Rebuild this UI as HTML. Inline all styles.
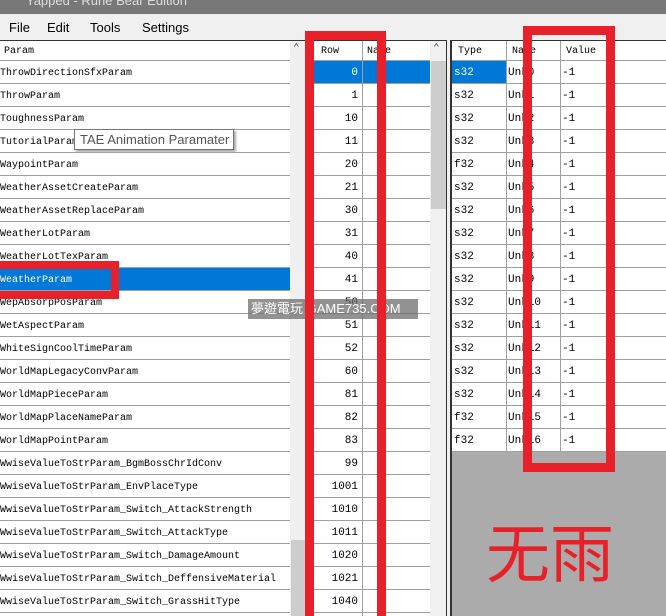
<!DOCTYPE html>
<html style="overflow:hidden;width:666px;height:616px"><head><meta charset="utf-8"><style>
*{margin:0;padding:0;box-sizing:border-box}
body{width:666px;height:616px;overflow:hidden;background:#f0f0f0;position:relative;font-family:"Liberation Mono","Noto Sans CJK SC",monospace;font-size:10px;color:#000}
.a{position:absolute}
.title{left:0;top:0;width:666px;height:14px;background:#787878;color:#ddd;font:13px "Liberation Sans",sans-serif;line-height:2px;padding-left:26px;overflow:hidden}
.menu{top:14px;left:0;width:666px;height:26px;background:#f0f0f0;font:13px "Liberation Sans",sans-serif}
.menu span{position:absolute;top:6px}
.panel{background:#fff;border-top:1px solid #333;border-left:1px solid #333}
.hdr{height:20px;border-bottom:1px solid #a0a0a0;line-height:22px;background:#fff}
.row{position:absolute;height:23px;border-bottom:1px solid #a0a0a0;line-height:25px;white-space:nowrap;overflow:hidden}
.sel{background:#0078d7;color:#fff}
.red{position:absolute;border:9px solid #e8202a}
.sb{position:absolute;background:#f0f0f0}
</style></head><body>
<div class="a title">Yapped - Rune Bear Edition</div>
<div class="a menu"><span style="left:9px">File</span><span style="left:47px">Edit</span><span style="left:90px">Tools</span><span style="left:142px">Settings</span></div>

<div class="a panel" style="left:0;top:40px;width:306px;height:576px;border-left:none">
<div class="hdr" style="width:290px;padding-left:4px">Param</div>
</div>
<div class="sb" style="left:290px;top:41px;width:16px;height:575px"></div>
<div class="a" style="left:293px;top:41px;font-size:11px;color:#555">&#8963;</div>
<div class="a" style="left:291px;top:540px;width:15px;height:76px;background:#cdcdcd"></div>
<div class="a" style="left:0;top:61px;width:290px">
<div class="row" style="top:0;width:290px">ThrowDirectionSfxParam</div>
<div class="row" style="top:23px;width:290px">ThrowParam</div>
<div class="row" style="top:46px;width:290px">ToughnessParam</div>
<div class="row" style="top:69px;width:290px">TutorialParam</div>
<div class="row" style="top:92px;width:290px">WaypointParam</div>
<div class="row" style="top:115px;width:290px">WeatherAssetCreateParam</div>
<div class="row" style="top:138px;width:290px">WeatherAssetReplaceParam</div>
<div class="row" style="top:161px;width:290px">WeatherLotParam</div>
<div class="row" style="top:184px;width:290px">WeatherLotTexParam</div>
<div class="row sel" style="top:207px;width:290px">WeatherParam</div>
<div class="row" style="top:230px;width:290px">WepAbsorpPosParam</div>
<div class="row" style="top:253px;width:290px">WetAspectParam</div>
<div class="row" style="top:276px;width:290px">WhiteSignCoolTimeParam</div>
<div class="row" style="top:299px;width:290px">WorldMapLegacyConvParam</div>
<div class="row" style="top:322px;width:290px">WorldMapPieceParam</div>
<div class="row" style="top:345px;width:290px">WorldMapPlaceNameParam</div>
<div class="row" style="top:368px;width:290px">WorldMapPointParam</div>
<div class="row" style="top:391px;width:290px">WwiseValueToStrParam_BgmBossChrIdConv</div>
<div class="row" style="top:414px;width:290px">WwiseValueToStrParam_EnvPlaceType</div>
<div class="row" style="top:437px;width:290px">WwiseValueToStrParam_Switch_AttackStrength</div>
<div class="row" style="top:460px;width:290px">WwiseValueToStrParam_Switch_AttackType</div>
<div class="row" style="top:483px;width:290px">WwiseValueToStrParam_Switch_DamageAmount</div>
<div class="row" style="top:506px;width:290px">WwiseValueToStrParam_Switch_DeffensiveMaterial</div>
<div class="row" style="top:529px;width:290px">WwiseValueToStrParam_Switch_GrassHitType</div>
</div>
<div class="a" style="left:74px;top:129px;width:160px;height:21px;background:#fff;border:1px solid #767676;box-shadow:2px 2px 2px #aaa;font:13px 'Liberation Sans',sans-serif;color:#555;line-height:19px;padding-left:5px">TAE Animation Paramater</div>

<div class="a panel" style="left:306px;top:40px;width:141px;height:576px;border-right:1px solid #333"></div>
<div class="sb" style="left:430px;top:41px;width:16px;height:575px"></div>
<div class="a" style="left:431px;top:61px;width:15px;height:148px;background:#cdcdcd"></div>
<div class="a" style="left:433px;top:41px;font-size:11px;color:#555">&#8963;</div>
<div class="sb" style="left:307px;top:41px;width:6px;height:575px;background:#fff"></div>
<div class="a hdr" style="left:313px;top:41px;width:117px"><span class="a" style="left:8px">Row</span><span class="a" style="left:54px">Name</span></div>
<div class="a" style="left:362px;top:41px;width:1px;height:575px;background:#a0a0a0"></div>
<div class="a" style="left:313px;top:61px;width:117px;font-size:11px">
<div class="row sel" style="top:0;width:49px;text-align:right;padding-right:4px">0</div><div class="row sel" style="top:0;left:50px;width:67px"></div>
<div class="row" style="top:23px;width:117px;text-align:right;padding-right:72px">1</div>
<div class="row" style="top:46px;width:117px;text-align:right;padding-right:72px">10</div>
<div class="row" style="top:69px;width:117px;text-align:right;padding-right:72px">11</div>
<div class="row" style="top:92px;width:117px;text-align:right;padding-right:72px">20</div>
<div class="row" style="top:115px;width:117px;text-align:right;padding-right:72px">21</div>
<div class="row" style="top:138px;width:117px;text-align:right;padding-right:72px">30</div>
<div class="row" style="top:161px;width:117px;text-align:right;padding-right:72px">31</div>
<div class="row" style="top:184px;width:117px;text-align:right;padding-right:72px">40</div>
<div class="row" style="top:207px;width:117px;text-align:right;padding-right:72px">41</div>
<div class="row" style="top:230px;width:117px;text-align:right;padding-right:72px">50</div>
<div class="row" style="top:253px;width:117px;text-align:right;padding-right:72px">51</div>
<div class="row" style="top:276px;width:117px;text-align:right;padding-right:72px">52</div>
<div class="row" style="top:299px;width:117px;text-align:right;padding-right:72px">60</div>
<div class="row" style="top:322px;width:117px;text-align:right;padding-right:72px">81</div>
<div class="row" style="top:345px;width:117px;text-align:right;padding-right:72px">82</div>
<div class="row" style="top:368px;width:117px;text-align:right;padding-right:72px">83</div>
<div class="row" style="top:391px;width:117px;text-align:right;padding-right:72px">99</div>
<div class="row" style="top:414px;width:117px;text-align:right;padding-right:72px">1001</div>
<div class="row" style="top:437px;width:117px;text-align:right;padding-right:72px">1010</div>
<div class="row" style="top:460px;width:117px;text-align:right;padding-right:72px">1011</div>
<div class="row" style="top:483px;width:117px;text-align:right;padding-right:72px">1020</div>
<div class="row" style="top:506px;width:117px;text-align:right;padding-right:72px">1021</div>
<div class="row" style="top:529px;width:117px;text-align:right;padding-right:72px">1040</div>
</div>

<div class="a panel" style="left:450px;top:40px;width:216px;height:576px;border-left:2px solid #333"></div>
<div class="a" style="left:452px;top:452px;width:214px;height:164px;background:#ababab"></div>
<div class="a hdr" style="left:452px;top:41px;width:214px"><span class="a" style="left:6px">Type</span><span class="a" style="left:60px">Name</span><span class="a" style="left:114px">Value</span></div>
<div class="a" style="left:506px;top:41px;width:1px;height:411px;background:#a0a0a0"></div>
<div class="a" style="left:560px;top:41px;width:1px;height:411px;background:#a0a0a0"></div>
<div class="a" style="left:606px;top:41px;width:1px;height:411px;background:#a0a0a0"></div>
<div class="a" style="left:452px;top:61px;width:214px;font-size:11px">
<div class="row sel" style="top:0;width:54px;padding-left:2px">s32</div>
<div class="row" style="top:0;left:54px;width:160px;padding-left:2px">Unk0<span class="a" style="left:56px">-1</span></div>
<div class="row" style="top:23px;width:214px;padding-left:2px">s32<span class="a" style="left:56px">Unk1</span><span class="a" style="left:110px">-1</span></div>
<div class="row" style="top:46px;width:214px;padding-left:2px">s32<span class="a" style="left:56px">Unk2</span><span class="a" style="left:110px">-1</span></div>
<div class="row" style="top:69px;width:214px;padding-left:2px">s32<span class="a" style="left:56px">Unk3</span><span class="a" style="left:110px">-1</span></div>
<div class="row" style="top:92px;width:214px;padding-left:2px">f32<span class="a" style="left:56px">Unk4</span><span class="a" style="left:110px">-1</span></div>
<div class="row" style="top:115px;width:214px;padding-left:2px">s32<span class="a" style="left:56px">Unk5</span><span class="a" style="left:110px">-1</span></div>
<div class="row" style="top:138px;width:214px;padding-left:2px">s32<span class="a" style="left:56px">Unk6</span><span class="a" style="left:110px">-1</span></div>
<div class="row" style="top:161px;width:214px;padding-left:2px">s32<span class="a" style="left:56px">Unk7</span><span class="a" style="left:110px">-1</span></div>
<div class="row" style="top:184px;width:214px;padding-left:2px">s32<span class="a" style="left:56px">Unk8</span><span class="a" style="left:110px">-1</span></div>
<div class="row" style="top:207px;width:214px;padding-left:2px">s32<span class="a" style="left:56px">Unk9</span><span class="a" style="left:110px">-1</span></div>
<div class="row" style="top:230px;width:214px;padding-left:2px">s32<span class="a" style="left:56px">Unk10</span><span class="a" style="left:110px">-1</span></div>
<div class="row" style="top:253px;width:214px;padding-left:2px">s32<span class="a" style="left:56px">Unk11</span><span class="a" style="left:110px">-1</span></div>
<div class="row" style="top:276px;width:214px;padding-left:2px">s32<span class="a" style="left:56px">Unk12</span><span class="a" style="left:110px">-1</span></div>
<div class="row" style="top:299px;width:214px;padding-left:2px">s32<span class="a" style="left:56px">Unk13</span><span class="a" style="left:110px">-1</span></div>
<div class="row" style="top:322px;width:214px;padding-left:2px">s32<span class="a" style="left:56px">Unk14</span><span class="a" style="left:110px">-1</span></div>
<div class="row" style="top:345px;width:214px;padding-left:2px">f32<span class="a" style="left:56px">Unk15</span><span class="a" style="left:110px">-1</span></div>
<div class="row" style="top:368px;width:214px;padding-left:2px">f32<span class="a" style="left:56px">Unk16</span><span class="a" style="left:110px">-1</span></div>
</div>

<div class="a" style="left:248px;top:299px;width:170px;height:20px;background:rgba(110,110,110,0.75);color:#fff;font:13px 'Liberation Sans','Noto Sans CJK TC',sans-serif;line-height:20px;padding-left:3px">夢遊電玩 GAME735.COM</div>

<div class="red" style="left:305px;top:31px;width:81px;height:585px;border-bottom:none"></div>
<div class="red" style="left:523px;top:26px;width:92px;height:446px"></div>
<div class="red" style="left:0;top:261px;width:119px;height:38px;border-width:8px;border-left:none"></div>
<div class="a" style="left:486px;top:510px;color:#e8202a;font:64px 'Noto Sans CJK SC',sans-serif;line-height:80px">无雨</div>
</body></html>
